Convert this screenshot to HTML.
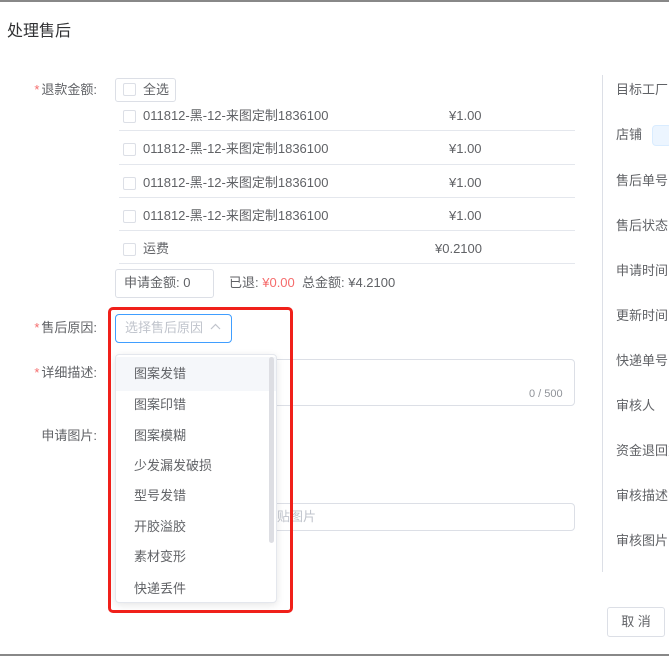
<!DOCTYPE html>
<html><head><meta charset="utf-8"><style>
*{margin:0;padding:0;box-sizing:border-box}
body{width:669px;height:656px;overflow:hidden;background:#fff;font-family:"Liberation Sans","Noto Sans CJK SC",sans-serif;font-size:13px;color:#606266;position:relative}
.a{position:absolute;white-space:nowrap}
.lbl{position:absolute;white-space:nowrap;right:572px;line-height:16px}
.req{color:#f56c6c;margin-right:2px}
.cb{position:absolute;width:13px;height:13px;border:1px solid #dcdfe6;border-radius:2px;background:#fff}
.sep{position:absolute;left:119px;width:456px;height:1px;background:#e4e7ed}
.rl{position:absolute;left:616px;white-space:nowrap;line-height:16px}
.it{position:absolute;left:134px;line-height:16px;color:#606266}
</style></head><body>
<div class="a" style="left:0;top:0;width:669px;height:2px;background:#888"></div>
<div class="a" style="left:0;top:654px;width:669px;height:2px;background:#888"></div>
<div class="a" style="left:7px;top:22px;font-size:16px;color:#303133;line-height:20px">处理售后</div>

<div class="lbl" style="top:82px"><span class="req">*</span>退款金额:</div>
<div class="a" style="left:115px;top:78px;width:61px;height:24px;border:1px solid #dcdfe6;border-radius:3px"></div>
<div class="cb" style="left:123px;top:83px"></div>
<div class="a" style="left:143px;top:82px;line-height:16px">全选</div>

<div class="cb" style="left:123px;top:110px"></div><div class="a" style="left:143px;top:108px;line-height:16px">011812-黑-12-来图定制1836100</div><div class="a" style="left:449px;top:108px;line-height:16px">¥1.00</div>
<div class="sep" style="top:130px"></div>
<div class="cb" style="left:123px;top:143px"></div><div class="a" style="left:143px;top:141px;line-height:16px">011812-黑-12-来图定制1836100</div><div class="a" style="left:449px;top:141px;line-height:16px">¥1.00</div>
<div class="sep" style="top:164px"></div>
<div class="cb" style="left:123px;top:177px"></div><div class="a" style="left:143px;top:175px;line-height:16px">011812-黑-12-来图定制1836100</div><div class="a" style="left:449px;top:175px;line-height:16px">¥1.00</div>
<div class="sep" style="top:197px"></div>
<div class="cb" style="left:123px;top:210px"></div><div class="a" style="left:143px;top:208px;line-height:16px">011812-黑-12-来图定制1836100</div><div class="a" style="left:449px;top:208px;line-height:16px">¥1.00</div>
<div class="sep" style="top:230px"></div>
<div class="cb" style="left:123px;top:243px"></div><div class="a" style="left:143px;top:241px;line-height:16px">运费</div><div class="a" style="left:435px;top:241px;line-height:16px">¥0.2100</div>
<div class="sep" style="top:263px"></div>

<div class="a" style="left:115px;top:269px;width:99px;height:29px;border:1px solid #dcdfe6;border-radius:3px"></div>
<div class="a" style="left:124px;top:275px;line-height:16px">申请金额: 0</div>
<div class="a" style="left:229px;top:275px;line-height:16px">已退: <span style="color:#f56c6c">¥0.00</span>&nbsp; 总金额: ¥4.2100</div>

<div class="lbl" style="top:320px"><span class="req">*</span>售后原因:</div>
<div class="a" style="left:115px;top:314px;width:117px;height:29px;border:1px solid #409eff;border-radius:4px"></div>
<div class="a" style="left:125px;top:320px;line-height:16px;color:#c0c4cc">选择售后原因</div>
<svg class="a" style="left:210px;top:323px" width="11" height="8"><path d="M1 6 L5.5 1.5 L10 6" fill="none" stroke="#c0c4cc" stroke-width="1.2"/></svg>

<div class="lbl" style="top:365px"><span class="req">*</span>详细描述:</div>
<div class="a" style="left:240px;top:359px;width:335px;height:47px;border:1px solid #dcdfe6;border-radius:4px"></div>
<div class="a" style="left:529px;top:388px;font-size:11px;color:#909399">0 / 500</div>
<div class="lbl" style="top:428px">申请图片:</div>
<div class="a" style="left:240px;top:503px;width:335px;height:28px;border:1px solid #dcdfe6;border-radius:4px"></div>
<div class="a" style="left:277px;top:509px;line-height:16px;color:#c0c4cc">贴图片</div>

<div class="a" style="left:115px;top:354px;width:162px;height:249px;background:#fff;border:1px solid #e4e7ed;border-radius:4px;box-shadow:0 2px 8px rgba(0,0,0,.1)"></div>
<div class="a" style="left:519px;top:349px;width:0;height:0"></div>
<div class="a" style="left:116px;top:357px;width:160px;height:34px;background:#f5f7fa"></div>
<div class="a" style="left:269px;top:357px;width:5px;height:186px;background:#dddee3;border-radius:3px"></div>
<div class="it" style="top:366px">图案发错</div>
<div class="it" style="top:397px">图案印错</div>
<div class="it" style="top:428px">图案模糊</div>
<div class="it" style="top:458px">少发漏发破损</div>
<div class="it" style="top:488px">型号发错</div>
<div class="it" style="top:519px">开胶溢胶</div>
<div class="it" style="top:549px">素材变形</div>
<div class="it" style="top:581px">快递丢件</div>
<div class="a" style="left:108px;top:307px;width:185px;height:306px;border:3px solid #f0201a;border-radius:5px"></div>

<div class="a" style="left:602px;top:75px;width:1px;height:497px;background:#dcdfe6"></div>
<div class="rl" style="top:82px">目标工厂</div>
<div class="rl" style="top:127px">店铺</div>
<div class="a" style="left:652px;top:125px;width:20px;height:21px;background:#ecf5ff;border:1px solid #d9ecff;border-radius:4px"></div>
<div class="rl" style="top:173px">售后单号</div>
<div class="rl" style="top:218px">售后状态</div>
<div class="rl" style="top:263px">申请时间</div>
<div class="rl" style="top:308px">更新时间</div>
<div class="rl" style="top:353px">快递单号</div>
<div class="rl" style="top:398px">审核人</div>
<div class="rl" style="top:443px">资金退回方</div>
<div class="rl" style="top:488px">审核描述</div>
<div class="rl" style="top:533px">审核图片</div>

<div class="a" style="left:607px;top:607px;width:58px;height:30px;border:1px solid #dcdfe6;border-radius:3px;text-align:center;line-height:28px;color:#606266">取 消</div>
</body></html>
